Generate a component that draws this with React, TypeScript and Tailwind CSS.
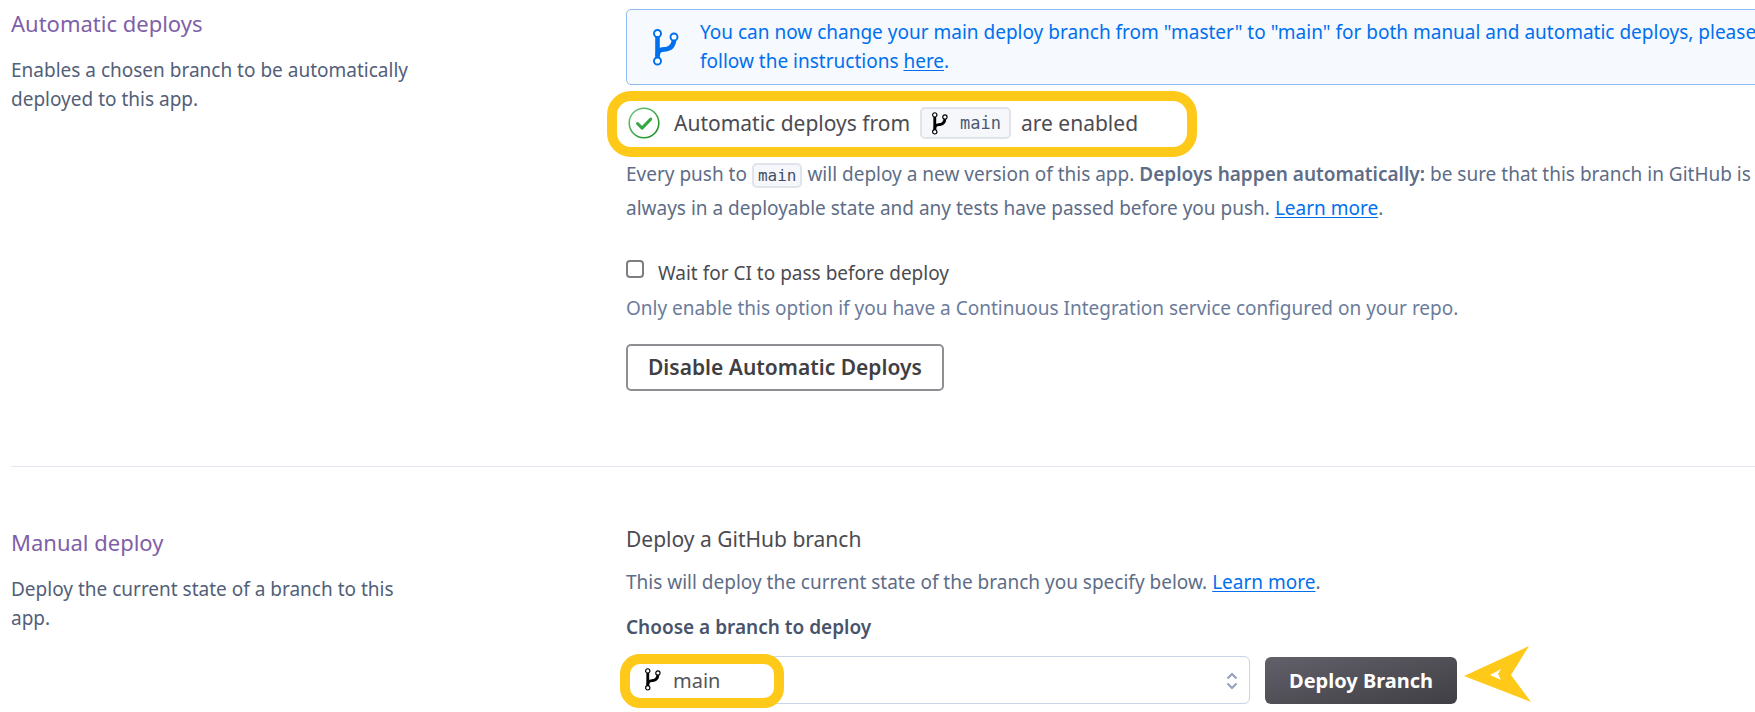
import type { ReactNode } from "react";

function BranchIcon({ className }: { className: string }) {
  return (
    <svg viewBox="0 0 26 37" fill="none" stroke="currentColor" className={className} aria-hidden="true">
      <path d="M4.5 7v24" strokeWidth="4.6" />
      <path d="M4.5 27C5 19.5 9.500 21 14 20C18.500 19 20.600 16.500 21 11" strokeWidth="4.6" />
      <circle cx="4.5" cy="4.5" r="3.5" strokeWidth="1.9" fill="#fff" />
      <circle cx="21" cy="8" r="3.5" strokeWidth="1.9" fill="#fff" />
      <circle cx="4.5" cy="32" r="3.5" strokeWidth="1.9" fill="#fff" />
    </svg>
  );
}

function CheckIcon() {
  return (
    <svg viewBox="0 0 32 32" fill="none" className="h-8 w-8" aria-hidden="true">
      <defs>
        <linearGradient id="ring" x1="0" y1="0" x2="1" y2="1">
          <stop offset="0" stopColor="#6fc97f" />
          <stop offset="1" stopColor="#178a1d" />
        </linearGradient>
      </defs>
      <circle cx="16" cy="16" r="14.8" stroke="url(#ring)" strokeWidth="1.6" />
      <path d="M9.5 16.5l4.6 4.6 8.6-9" stroke="#35a744" strokeWidth="3" strokeLinecap="round" strokeLinejoin="round" />
    </svg>
  );
}

function Highlight({ className }: { className: string }) {
  return (
    <span
      aria-hidden="true"
      className={`pointer-events-none absolute border-10 border-[#ffc91a] ${className}`}
    />
  );
}

function Link({ children }: { children: ReactNode }) {
  return (
    <a href="#" className="text-[#0070ee] underline decoration-1 underline-offset-2">
      {children}
    </a>
  );
}

function Section({
  title,
  text,
  headClass,
  children,
}: {
  title: string;
  text: string;
  headClass: string;
  children: ReactNode;
}) {
  return (
    <section className="flex">
      <div className={`w-[615px] shrink-0 ${headClass}`}>
        <h2 className="text-[22px] leading-7 text-[#7f5fa8]">{title}</h2>
        <p className="mt-[19px] max-w-[420px] text-[#526079]">{text}</p>
      </div>
      <div className="min-w-0 flex-1">{children}</div>
    </section>
  );
}

export default function App() {
  return (
    <main className="overflow-hidden bg-white pb-2 pl-[11px] font-['Noto_Sans',sans-serif] text-[19px] leading-[29px]">
      <div className="w-[calc(100%+77px)] pt-[9px]">
        <Section
          title="Automatic deploys"
          text="Enables a chosen branch to be automatically deployed to this app."
          headClass=""
        >
          <div className="flex items-center rounded-[5px] border border-[#8fbcf3] bg-[#f6f9fe] py-2 pr-5 pl-[26px] text-[#0070ee]">
            <BranchIcon className="mr-[21px] h-[37px] w-[26px] shrink-0" />
            <p>
              You can now change your main deploy branch from "master" to "main" for both manual and automatic
              deploys, please follow the instructions <Link>here</Link>.
            </p>
          </div>

          <div className="relative mt-[18px] flex h-10 items-center pl-[2px] text-[21px] text-[#4b4b51]">
            <CheckIcon />
            <span className="ml-[14px]">Automatic deploys from</span>
            <code className="mx-[10px] flex h-8 items-center gap-3 rounded-[5px] border-2 border-[#e1e4ea] bg-[#f6f7fb] px-2 font-['DejaVu_Sans_Mono',monospace] text-[17px] text-[#4b5a73]">
              <BranchIcon className="ml-[2px] h-[23px] w-4 text-black" />
              main
            </code>
            <span>are enabled</span>
            <Highlight className="-top-3 -left-[19px] h-[66px] w-[590px] rounded-[24px]" />
          </div>

          <p className="mt-[14px] pr-5 leading-[34px] text-[#5e6d87]">
            Every push to{" "}
            <code className="rounded-[5px] border-2 border-[#e1e4ea] bg-[#f6f7fb] px-1 py-[1px] font-['DejaVu_Sans_Mono',monospace] text-base text-[#434f66]">
              main
            </code>{" "}
            will deploy a new version of this app.{" "}
            <strong className="font-semibold">Deploys happen automatically:</strong> be sure that this branch in
            GitHub is always in a deployable state and any tests have passed before you push.{" "}
            <Link>Learn more</Link>.
          </p>

          <label className="mt-[34px] flex items-start gap-[14px] text-[#4b4b51]">
            <input
              type="checkbox"
              className="mt-[1px] h-[18px] w-[18px] appearance-none rounded-[4px] border-2 border-[#7d7d82] bg-white checked:bg-[#79589f]"
            />
            Wait for CI to pass before deploy
          </label>
          <p className="mt-[6px] text-[#6b7c9b]">
            Only enable this option if you have a Continuous Integration service configured on your repo.
          </p>
          <button
            type="button"
            className="mt-[21px] flex h-[47px] items-center rounded-[5px] border-2 border-[#8f8f93] bg-white px-5 text-[21px] font-semibold text-[#3f3f44]"
          >
            Disable Automatic Deploys
          </button>
        </Section>

        <hr className="mt-[75px] mb-[58px] border-[#e4e8f2]" />

        <Section
          title="Manual deploy"
          text="Deploy the current state of a branch to this app."
          headClass="pt-[3px]"
        >
          <h3 className="text-[21px] leading-7 text-[#4b4b51]">Deploy a GitHub branch</h3>
          <p className="mt-[15px] text-[#5e6d87]">
            This will deploy the current state of the branch you specify below. <Link>Learn more</Link>.
          </p>
          <label htmlFor="branch" className="mt-4 block font-semibold text-[#47546b]">
            Choose a branch to deploy
          </label>
          <div className="mt-[14px] flex items-end">
            <div className="relative w-[624px]">
              <select
                id="branch"
                className="block h-12 w-full appearance-none rounded-[6px] border border-[#c9d4e6] bg-white pl-[46px] text-[20px] text-[#55555a]"
              >
                <option>main</option>
              </select>
              <BranchIcon className="pointer-events-none absolute top-3 left-[19px] h-[23px] w-4 text-black" />
              <svg
                viewBox="0 0 12 18"
                fill="none"
                className="pointer-events-none absolute top-4 right-3 h-[18px] w-3"
                aria-hidden="true"
              >
                <path d="M1.5 6.5L6 2l4.5 4.5M1.5 11.5L6 16l4.5-4.5" stroke="#96a3bb" strokeWidth="2.2" />
              </svg>
              <Highlight className="-top-[2px] -left-[6px] h-[54px] w-[164px] rounded-[20px]" />
            </div>
            <div className="relative ml-[15px]">
              <button
                type="button"
                className="flex h-[47px] items-center rounded-[6px] bg-linear-to-br from-[#62616a] to-[#403f45] px-6 text-[20px] font-bold text-white"
              >
                Deploy Branch
              </button>
              <svg
                viewBox="0 0 68 58"
                className="pointer-events-none absolute -top-3 left-full ml-[7px] h-[58px] w-[68px]"
                aria-hidden="true"
              >
                <path
                  fillRule="evenodd"
                  fill="#ffc91a"
                  d="M0 31L65 1L47 30L67 57ZM26 30L37 24L34 29L37 35Z"
                />
              </svg>
            </div>
          </div>
        </Section>
      </div>
    </main>
  );
}
